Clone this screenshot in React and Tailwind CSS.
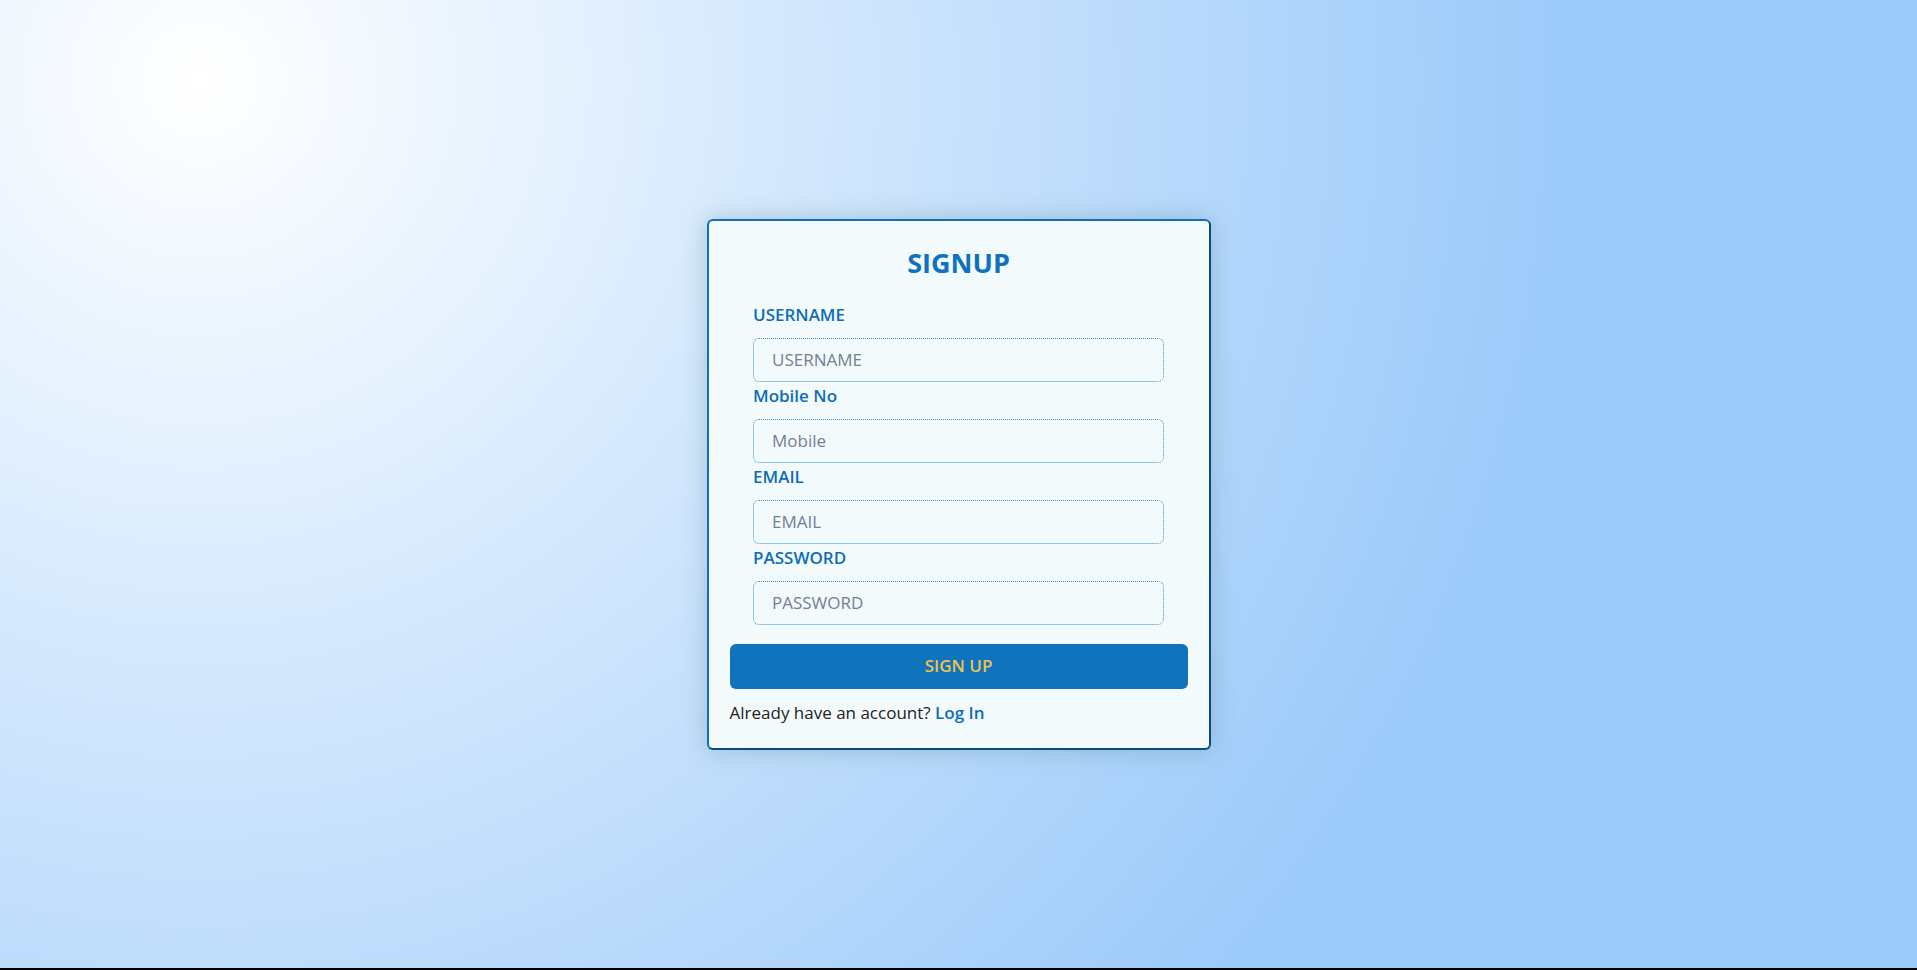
export default function App() {
  const fields = [
    { label: "USERNAME", ph: "USERNAME", type: "text" },
    { label: "Mobile No", ph: "Mobile", type: "text" },
    { label: "EMAIL", ph: "EMAIL", type: "email" },
    { label: "PASSWORD", ph: "PASSWORD", type: "password" },
  ];
  return (
    <div
      className="h-[970px] w-full box-border border-b-2 border-black flex items-center justify-center bg-[radial-gradient(circle_at_200px_80px,#ffffff_0px,#9ccafa_1360px)]"
      style={{ fontFamily: '"Open Sans", "Noto Sans", sans-serif' }}
    >
      <div className="w-[504px] box-border rounded-[6px] border-2 border-t-[#0f6fba] border-l-[#0f6fba] border-r-[#0c4a7c] border-b-[#0c4a7c] bg-[#f2fafc] shadow-[0_0_24px_rgba(90,140,150,0.4)] px-[21px] pt-[25px] pb-[22px]">
        <h2 className="text-center text-[27px] leading-[34px] font-bold text-[#1071bd]">SIGNUP</h2>
        <form className="mt-[21px] flex flex-col" onSubmit={(e) => e.preventDefault()}>
          <div className="w-[411px] mx-auto flex flex-col">
            {fields.map((f) => (
              <div key={f.label} className="flex flex-col">
                <label className="text-[17px] leading-[27px] font-semibold text-[#0f6db5]">{f.label}</label>
                <input
                  type={f.type}
                  placeholder={f.ph}
                  className="mt-[10px] h-[44px] w-full box-border rounded-[6px] border border-dotted border-[#3d8fd3] bg-transparent px-[18px] text-[17px] text-[#333] placeholder:text-[#737f93] outline-none"
                />
              </div>
            ))}
          </div>
          <button
            type="submit"
            className="mt-[19px] h-[45px] w-full rounded-[6px] bg-[#0f73bd] text-[17px] font-semibold text-[#f2c14e]"
          >
            SIGN UP
          </button>
        </form>
        <p className="mt-[10px] text-[17px] leading-[27px] text-[#222]">
          Already have an account?{" "}
          <a href="#" className="font-semibold text-[#0f6db5]">Log In</a>
        </p>
      </div>
    </div>
  );
}
